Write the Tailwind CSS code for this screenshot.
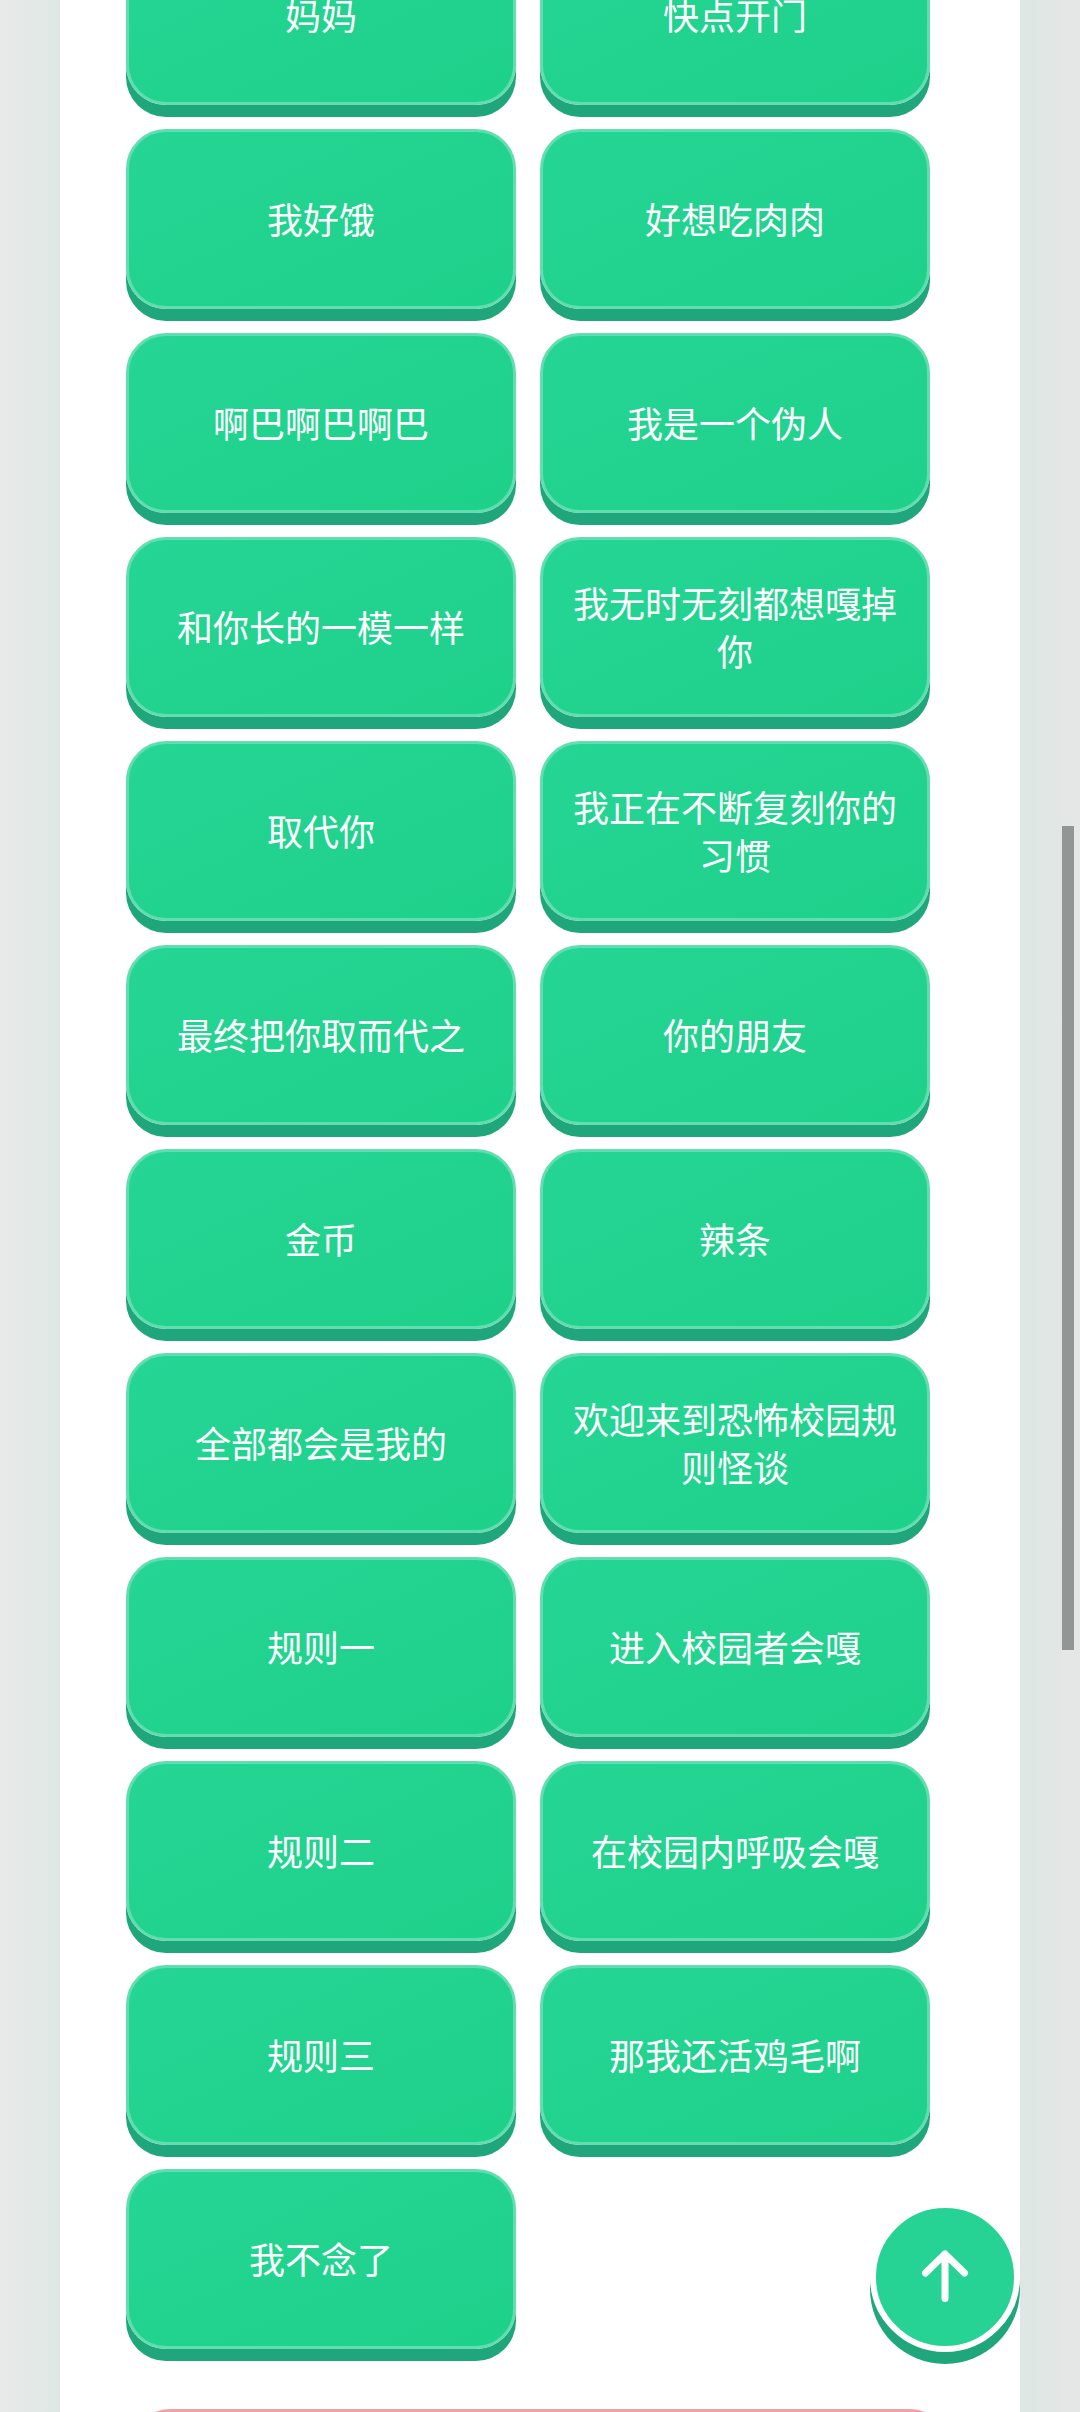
<!doctype html>
<html lang="zh">
<head>
<meta charset="utf-8">
<script src="https://cdn.jsdelivr.net/npm/@tailwindcss/browser@4"></script>
</head>
<body class="m-0 overflow-hidden">
<div class="relative h-[2412px] w-[1080px] overflow-hidden font-['Noto_Sans_CJK_SC','Noto_Sans',sans-serif] font-normal">
  <div class="flex h-full">
    <div class="w-[60px] shrink-0 bg-gradient-to-r from-[#e8eae8] to-[#dfe8e5]"></div>
    <main class="w-[960px] shrink-0 bg-white px-[66px]">
      <div class="mt-[-75px] grid grid-cols-[390px_390px] gap-x-[24px] gap-y-[24px]">
        <button class="flex h-[180px] items-center justify-center rounded-[40px] border-[3px] border-[#62ddb0] bg-gradient-to-br from-[#25d595] to-[#1ed18a] px-[24px] pb-[3px] text-center text-[36px] leading-[48px] text-white shadow-[0_12px_0_#1fa67a]">妈妈</button>
        <button class="flex h-[180px] items-center justify-center rounded-[40px] border-[3px] border-[#62ddb0] bg-gradient-to-br from-[#25d595] to-[#1ed18a] px-[24px] pb-[3px] text-center text-[36px] leading-[48px] text-white shadow-[0_12px_0_#1fa67a]">快点开门</button>
        <button class="flex h-[180px] items-center justify-center rounded-[40px] border-[3px] border-[#62ddb0] bg-gradient-to-br from-[#25d595] to-[#1ed18a] px-[24px] pb-[3px] text-center text-[36px] leading-[48px] text-white shadow-[0_12px_0_#1fa67a]">我好饿</button>
        <button class="flex h-[180px] items-center justify-center rounded-[40px] border-[3px] border-[#62ddb0] bg-gradient-to-br from-[#25d595] to-[#1ed18a] px-[24px] pb-[3px] text-center text-[36px] leading-[48px] text-white shadow-[0_12px_0_#1fa67a]">好想吃肉肉</button>
        <button class="flex h-[180px] items-center justify-center rounded-[40px] border-[3px] border-[#62ddb0] bg-gradient-to-br from-[#25d595] to-[#1ed18a] px-[24px] pb-[3px] text-center text-[36px] leading-[48px] text-white shadow-[0_12px_0_#1fa67a]">啊巴啊巴啊巴</button>
        <button class="flex h-[180px] items-center justify-center rounded-[40px] border-[3px] border-[#62ddb0] bg-gradient-to-br from-[#25d595] to-[#1ed18a] px-[24px] pb-[3px] text-center text-[36px] leading-[48px] text-white shadow-[0_12px_0_#1fa67a]">我是一个伪人</button>
        <button class="flex h-[180px] items-center justify-center rounded-[40px] border-[3px] border-[#62ddb0] bg-gradient-to-br from-[#25d595] to-[#1ed18a] px-[24px] pb-[3px] text-center text-[36px] leading-[48px] text-white shadow-[0_12px_0_#1fa67a]">和你长的一模一样</button>
        <button class="flex h-[180px] items-center justify-center rounded-[40px] border-[3px] border-[#62ddb0] bg-gradient-to-br from-[#25d595] to-[#1ed18a] px-[24px] pb-[3px] text-center text-[36px] leading-[48px] text-white shadow-[0_12px_0_#1fa67a]">我无时无刻都想嘎掉你</button>
        <button class="flex h-[180px] items-center justify-center rounded-[40px] border-[3px] border-[#62ddb0] bg-gradient-to-br from-[#25d595] to-[#1ed18a] px-[24px] pb-[3px] text-center text-[36px] leading-[48px] text-white shadow-[0_12px_0_#1fa67a]">取代你</button>
        <button class="flex h-[180px] items-center justify-center rounded-[40px] border-[3px] border-[#62ddb0] bg-gradient-to-br from-[#25d595] to-[#1ed18a] px-[24px] pb-[3px] text-center text-[36px] leading-[48px] text-white shadow-[0_12px_0_#1fa67a]">我正在不断复刻你的习惯</button>
        <button class="flex h-[180px] items-center justify-center rounded-[40px] border-[3px] border-[#62ddb0] bg-gradient-to-br from-[#25d595] to-[#1ed18a] px-[24px] pb-[3px] text-center text-[36px] leading-[48px] text-white shadow-[0_12px_0_#1fa67a]">最终把你取而代之</button>
        <button class="flex h-[180px] items-center justify-center rounded-[40px] border-[3px] border-[#62ddb0] bg-gradient-to-br from-[#25d595] to-[#1ed18a] px-[24px] pb-[3px] text-center text-[36px] leading-[48px] text-white shadow-[0_12px_0_#1fa67a]">你的朋友</button>
        <button class="flex h-[180px] items-center justify-center rounded-[40px] border-[3px] border-[#62ddb0] bg-gradient-to-br from-[#25d595] to-[#1ed18a] px-[24px] pb-[3px] text-center text-[36px] leading-[48px] text-white shadow-[0_12px_0_#1fa67a]">金币</button>
        <button class="flex h-[180px] items-center justify-center rounded-[40px] border-[3px] border-[#62ddb0] bg-gradient-to-br from-[#25d595] to-[#1ed18a] px-[24px] pb-[3px] text-center text-[36px] leading-[48px] text-white shadow-[0_12px_0_#1fa67a]">辣条</button>
        <button class="flex h-[180px] items-center justify-center rounded-[40px] border-[3px] border-[#62ddb0] bg-gradient-to-br from-[#25d595] to-[#1ed18a] px-[24px] pb-[3px] text-center text-[36px] leading-[48px] text-white shadow-[0_12px_0_#1fa67a]">全部都会是我的</button>
        <button class="flex h-[180px] items-center justify-center rounded-[40px] border-[3px] border-[#62ddb0] bg-gradient-to-br from-[#25d595] to-[#1ed18a] px-[24px] pb-[3px] text-center text-[36px] leading-[48px] text-white shadow-[0_12px_0_#1fa67a]">欢迎来到恐怖校园规则怪谈</button>
        <button class="flex h-[180px] items-center justify-center rounded-[40px] border-[3px] border-[#62ddb0] bg-gradient-to-br from-[#25d595] to-[#1ed18a] px-[24px] pb-[3px] text-center text-[36px] leading-[48px] text-white shadow-[0_12px_0_#1fa67a]">规则一</button>
        <button class="flex h-[180px] items-center justify-center rounded-[40px] border-[3px] border-[#62ddb0] bg-gradient-to-br from-[#25d595] to-[#1ed18a] px-[24px] pb-[3px] text-center text-[36px] leading-[48px] text-white shadow-[0_12px_0_#1fa67a]">进入校园者会嘎</button>
        <button class="flex h-[180px] items-center justify-center rounded-[40px] border-[3px] border-[#62ddb0] bg-gradient-to-br from-[#25d595] to-[#1ed18a] px-[24px] pb-[3px] text-center text-[36px] leading-[48px] text-white shadow-[0_12px_0_#1fa67a]">规则二</button>
        <button class="flex h-[180px] items-center justify-center rounded-[40px] border-[3px] border-[#62ddb0] bg-gradient-to-br from-[#25d595] to-[#1ed18a] px-[24px] pb-[3px] text-center text-[36px] leading-[48px] text-white shadow-[0_12px_0_#1fa67a]">在校园内呼吸会嘎</button>
        <button class="flex h-[180px] items-center justify-center rounded-[40px] border-[3px] border-[#62ddb0] bg-gradient-to-br from-[#25d595] to-[#1ed18a] px-[24px] pb-[3px] text-center text-[36px] leading-[48px] text-white shadow-[0_12px_0_#1fa67a]">规则三</button>
        <button class="flex h-[180px] items-center justify-center rounded-[40px] border-[3px] border-[#62ddb0] bg-gradient-to-br from-[#25d595] to-[#1ed18a] px-[24px] pb-[3px] text-center text-[36px] leading-[48px] text-white shadow-[0_12px_0_#1fa67a]">那我还活鸡毛啊</button>
        <button class="flex h-[180px] items-center justify-center rounded-[40px] border-[3px] border-[#62ddb0] bg-gradient-to-br from-[#25d595] to-[#1ed18a] px-[24px] pb-[3px] text-center text-[36px] leading-[48px] text-white shadow-[0_12px_0_#1fa67a]">我不念了</button>
      </div>
      <div class="mx-[4px] mt-[60px] h-[60px] rounded-t-[40px] bg-[#f1a1a6]"></div>
    </main>
    <div class="w-[60px] shrink-0 bg-gradient-to-r from-[#dde7e3] to-[#e5e7e6]"></div>
  </div>
  <button class="absolute left-[870px] top-[2202px] flex h-[150px] w-[150px] items-center justify-center rounded-full border-[6px] border-white bg-[#26d394] shadow-[0_12px_0_#1fa67a]">
    <svg width="48" height="54" viewBox="0 0 48 54" fill="none" stroke="white" stroke-width="7" stroke-linecap="round" stroke-linejoin="round"><path d="M24 48.5V4M4.5 23 24 4 43.5 23"/></svg>
  </button>
  <div class="absolute left-[1062px] top-[826px] h-[824px] w-[12px] bg-[#929695]"></div>
</div>
</body>
</html>
